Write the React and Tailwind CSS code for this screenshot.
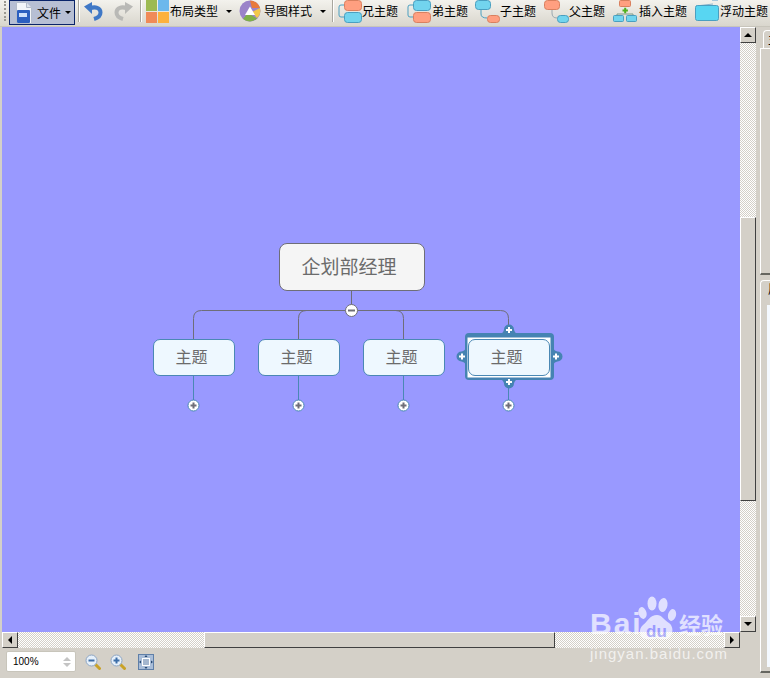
import React from "react";

const font = { fontFamily: '"Noto Sans CJK SC", sans-serif' };

function Rect({ x, y, w, h, fill, stroke }) {
  return <rect x={x} y={y} width={w} height={h} rx="3" fill={fill} stroke={stroke} />;
}

const ORANGE = "#ff9f80";
const ORANGE_D = "#d9805f";
const CYAN = "#72d4ee";
const CYAN_D = "#4a9fc0";

function DocIcon() {
  return (
    <svg width="17" height="22" viewBox="0 0 17 22">
      <path d="M1.5.5h10l5 5v16h-15z" fill="#f4f6fa" stroke="#b4bccb" />
      <path d="M11.500.5v5h5" fill="#dfe4ee" stroke="#b4bccb" />
      <rect x="2" y="8" width="13" height="13" rx="1" fill="#2c5fc0" />
      <rect x="4" y="11" width="8" height="4" fill="#cfe0fb" />
    </svg>
  );
}

function Arrow({ color }) {
  return (
    <svg width="19" height="20" viewBox="0 0 19 20">
      <path d="M6 7.500C11 5 16.500 7 16.500 11.500C16.500 15 13.500 17 10 18" fill="none" stroke={color} strokeWidth="4" />
      <path d="M0 5.500 8 1V13z" fill={color} />
    </svg>
  );
}

function LayoutIcon() {
  return (
    <svg width="23" height="23" viewBox="0 0 23 23">
      <rect x="0" y="0" width="11" height="11" fill="#9cba52" />
      <rect x="12" y="0" width="11" height="11" fill="#6cb8ec" />
      <rect x="0" y="12" width="11" height="11" fill="#f08a58" />
      <rect x="12" y="12" width="11" height="11" fill="#fdb13d" />
    </svg>
  );
}

function StyleIcon() {
  return (
    <svg width="22" height="22" viewBox="0 0 22 22">
      <circle cx="11" cy="11" r="10.5" fill="#9b83c9" />
      <path d="M11 .5A10.500 10.500 0 0 1 21 8H13z" fill="#e87a3c" />
      <path d="M21 8a10.500 10.500 0 0 1-3 10L13 12z" fill="#f2c84a" />
      <path d="M18 18.500A10.500 10.500 0 0 1 4 19l5-6z" fill="#7fb048" />
      <path d="M11 6.500 16 15H6z" fill="#fff" />
    </svg>
  );
}

function SiblingUp() {
  return (
    <svg width="24" height="23" viewBox="0 0 24 23">
      <path d="M7 5H3Q1 5 1 7V15Q1 17 3 17H7" fill="none" stroke={CYAN_D} />
      <Rect x={6.5} y={.5} w={17} h={10} fill={ORANGE} stroke={ORANGE_D} />
      <Rect x={6.5} y={12.5} w={17} h={10} fill={CYAN} stroke={CYAN_D} />
    </svg>
  );
}

function SiblingDown() {
  return (
    <svg width="24" height="23" viewBox="0 0 24 23">
      <path d="M7 5H3Q1 5 1 7V15Q1 17 3 17H7" fill="none" stroke={CYAN_D} />
      <Rect x={6.5} y={.5} w={17} h={10} fill={CYAN} stroke={CYAN_D} />
      <Rect x={6.5} y={12.5} w={17} h={10} fill={ORANGE} stroke={ORANGE_D} />
    </svg>
  );
}

function ChildIcon() {
  return (
    <svg width="25" height="23" viewBox="0 0 25 23">
      <path d="M6 10V14Q6 18 12 18" fill="none" stroke={CYAN_D} />
      <Rect x={.5} y={.5} w={15} h={9} fill={CYAN} stroke={CYAN_D} />
      <Rect x={12.5} y={15.5} w={12} h={7} fill={ORANGE} stroke={ORANGE_D} />
    </svg>
  );
}

function ParentIcon() {
  return (
    <svg width="25" height="23" viewBox="0 0 25 23">
      <path d="M8 9V13Q8 18 13 18" fill="none" stroke="#9aa8b0" />
      <Rect x={.5} y={.5} w={15} h={9} fill={ORANGE} stroke={ORANGE_D} />
      <Rect x={13.5} y={15.5} w={11} h={7} fill={CYAN} stroke={CYAN_D} />
    </svg>
  );
}

function InsertIcon() {
  return (
    <svg width="24" height="22" viewBox="0 0 24 22">
      <path d="M4 17V14H20V17" fill="none" stroke="#7a9a8a" />
      <rect x="6.500" y=".5" width="11" height="6" rx="1" fill={ORANGE} stroke={ORANGE_D} />
      <rect x=".5" y="15.500" width="10" height="6" rx="1" fill={CYAN} stroke={CYAN_D} />
      <rect x="13.500" y="15.500" width="10" height="6" rx="1" fill={CYAN} stroke={CYAN_D} />
      <path d="M9.500 9.500h1.700V7.800h2v1.700h1.700v2h-1.700v1.700h-2v-1.700h-1.700z" fill="#4fb01e" />
    </svg>
  );
}

function FloatIcon() {
  return (
    <svg width="24" height="23" viewBox="0 0 24 23">
      <path d="M17 .5h6" stroke="#a8c8dc" />
      <path d="M1 6l17-2" stroke="#8ab4cc" />
      <rect x=".5" y="5.500" width="23" height="15" rx="2" fill="#58d6f2" stroke="#4a9fc0" />
    </svg>
  );
}

function Dropdown() {
  return <div className="w-0 h-0 border-x-[3px] border-x-transparent border-t-[3px] border-t-black" />;
}

function ToolLabel({ left, width, icon, label, gap = 0 }) {
  return (
    <div className="flex items-center shrink-0" style={{ marginLeft: left, width, gap }}>
      {icon}
      <span className="text-xs text-black whitespace-nowrap">{label}</span>
    </div>
  );
}

function Separator() {
  return <div className="w-px h-[22px] bg-[#a8a69e] border-r border-white shrink-0 box-content" />;
}

function Toolbar() {
  return (
    <div className="h-[27px] pb-[4px] flex items-center shrink-0 overflow-hidden bg-gradient-to-b from-[#f3f2ed] to-[#d9d6cd] border-b border-[#c8c5bb]">
      {/* grip */}
      <div className="w-px h-5 ml-[4px] border-l-2 border-dotted border-[#9a9890]" />
      <div className="w-[66px] h-[25px] ml-[3px] self-start flex items-center pl-[5px] bg-[#b7bfd4] border border-[#0a246a] shrink-0">
        <DocIcon />
        <span className="text-xs text-black ml-[5px]">文件</span>
        <div className="ml-[4px]"><Dropdown /></div>
      </div>
      <div className="ml-[3px]"><Separator /></div>
      <div className="ml-[4px] shrink-0"><Arrow color="#3f78c6" /></div>
      <div className="ml-[11px] shrink-0 -scale-x-100"><Arrow color="#b9b9b6" /></div>
      <div className="ml-[7px]"><Separator /></div>
      <ToolLabel left={4} width={73} icon={<LayoutIcon />} label="布局类型" gap={1} />
      <div className="ml-[7px]"><Dropdown /></div>
      <ToolLabel left={7} width={73} icon={<StyleIcon />} label="导图样式" gap={3} />
      <div className="ml-[8px]"><Dropdown /></div>
      <div className="ml-[6px]"><Separator /></div>
      <ToolLabel left={4} width={61} icon={<SiblingUp />} label="兄主题" />
      <ToolLabel left={8} width={61} icon={<SiblingDown />} label="弟主题" gap={1} />
      <ToolLabel left={7} width={62} icon={<ChildIcon />} label="子主题" />
      <ToolLabel left={7} width={63} icon={<ParentIcon />} label="父主题" />
      <ToolLabel left={6} width={75} icon={<InsertIcon />} label="插入主题" gap={2} />
      <ToolLabel left={7} width={75} icon={<FloatIcon />} label="浮动主题" gap={1} />
    </div>
  );
}

function ScrollButton({ dir }) {
  const tri = {
    up: "border-x-[4px] border-x-transparent border-b-[4px] border-b-black",
    down: "border-x-[4px] border-x-transparent border-t-[4px] border-t-black",
    left: "border-y-[4px] border-y-transparent border-r-[4px] border-r-black",
    right: "border-y-[4px] border-y-transparent border-l-[4px] border-l-black",
  }[dir];
  return (
    <div className="w-4 h-4 shrink-0 flex items-center justify-center bg-[#d4d0c8] border border-t-white border-l-white border-r-[#404040] border-b-[#404040]">
      <div className={`w-0 h-0 ${tri}`} />
    </div>
  );
}

const trackCls = "bg-[repeating-conic-gradient(#d4d0c8_0_25%,#ffffff_0_50%)] bg-[length:2px_2px]";
const thumbCls = "bg-[#d4d0c8] border border-t-white border-l-white border-r-[#404040] border-b-[#404040]";

const BUMP = "M-9 5Q-5.500 4-5 .5A5 5 0 0 1 5 .5Q5.500 4 9 5z";

function Connectors() {
  const stem = "#6e6e78";
  const blue = "#4a88b4";
  const frame = "#4583b2";
  return (
    <svg className="absolute inset-0" width="738" height="605" viewBox="2 27 738 605">
      <path d="M351.500 291V310.500" fill="none" stroke={stem} />
      <path d="M193.500 339V318.500Q193.500 310.500 201.500 310.500H500.500Q508.500 310.500 508.500 318.500V334" fill="none" stroke={stem} />
      <path d="M298.500 339V318.500Q298.500 310.500 306.500 310.500" fill="none" stroke={stem} />
      <path d="M395.500 310.500Q403.500 310.500 403.500 318.500V339" fill="none" stroke={stem} />
      {[193.500, 298.500, 403.500].map((x) => (
        <path key={x} d={`M${x} 376V400`} stroke={blue} />
      ))}
      <path d="M508.500 380V400" stroke={blue} />
      {/* selection frame of the active topic */}
      <rect x="465" y="333" width="89" height="47" rx="4" fill={frame} />
      <rect x="467.500" y="337.500" width="83" height="40" fill="#ffffff" />
      {[
        [509, 329, 0],
        [509, 384, 180],
        [461, 356.500, -90],
        [558, 356.500, 90],
      ].map(([cx, cy, r]) => (
        <path key={r} d={BUMP} fill={frame} transform={`translate(${cx} ${cy}) rotate(${r})`} />
      ))}
      {[
        [509, 330],
        [509, 382],
        [462, 356.500],
        [556, 356.500],
      ].map(([cx, cy]) => (
        <path key={`${cx}-${cy}`} d={`M${cx - 3} ${cy}h6M${cx} ${cy - 3}v6`} stroke="#ffffff" strokeWidth="2" />
      ))}
      {/* folding handles */}
      <circle cx="351.500" cy="310.500" r="6" fill="#ffffff" stroke={stem} />
      <path d="M348 310.500h7" stroke={stem} strokeWidth="2" />
      {[193.500, 298.500, 403.500, 508.500].map((x) => (
        <g key={x}>
          <circle cx={x} cy="405.500" r="5.500" fill="#ffffff" stroke={blue} />
          <path d={`M${x - 3} 405.500h6M${x} 402.500v6`} stroke="#6e6e78" strokeWidth="2" />
        </g>
      ))}
    </svg>
  );
}

function Topic({ left }) {
  return (
    <div
      className="absolute top-[312px] w-[82px] h-[37px] pb-[3px] pr-[5px] flex items-center justify-center rounded-[7px] text-base text-[#6b6b6b] bg-[#eef8ff] border border-[#4a88b4]"
      style={{ left }}
    >
      主题
    </div>
  );
}

function MindMap() {
  return (
    <div className="relative w-[738px] h-[605px] bg-[#9999ff] shrink-0 overflow-hidden">
      <Connectors />
      <div className="absolute left-[277px] top-[216px] w-[146px] h-[48px] pb-[2px] pr-[6px] flex items-center justify-center rounded-[8px] bg-[#f5f5f5] border border-[#6e6e78] text-[19px] text-[#6b6b6b]">
        企划部经理
      </div>
      <Topic left={151} />
      <Topic left={256} />
      <Topic left={361} />
      <Topic left={466} />
    </div>
  );
}

function MagnifierIcon({ plus }) {
  return (
    <svg width="16" height="16" viewBox="0 0 16 16">
      <path d="M10 10l4.500 4.500" stroke="#c9a227" strokeWidth="3" strokeLinecap="round" />
      <circle cx="6.500" cy="6.500" r="5.500" fill="#e6f0fa" stroke="#8ea6c4" />
      <path d={plus ? "M3.500 6.500h6M6.500 3.500v6" : "M3.500 6.500h6"} stroke="#3c6ea8" strokeWidth="2" />
    </svg>
  );
}

function FitIcon() {
  return (
    <svg width="16" height="16" viewBox="0 0 16 16">
      <rect x=".5" y=".5" width="15" height="15" fill="#a9bdd8" stroke="#5f7fa8" />
      <rect x="4" y="4" width="8" height="8" fill="#ffffff" />
      <path d="M5 6h6M5 8h6M5 10h6" stroke="#4a6f9e" />
      <path d="M8 1l1.500 2h-3zM8 15l1.500-2h-3zM1 8l2-1.500v3zM15 8l-2-1.500v3z" fill="#24466f" />
    </svg>
  );
}

function BottomBar() {
  return (
    <div className="flex items-center h-[30px] pl-[4px] pb-[3px] shrink-0">
      <div className="w-[70px] h-[21px] flex items-center justify-between pl-[6px] pr-[4px] bg-white rounded-[2px] border border-[#c8c5bb]">
        <span className="text-[10px] text-black" style={{ fontFamily: '"Liberation Sans", sans-serif' }}>100%</span>
        <div className="flex flex-col gap-[2px]">
          <div className="w-0 h-0 border-x-[4px] border-x-transparent border-b-[4px] border-b-[#c4c4c4]" />
          <div className="w-0 h-0 border-x-[4px] border-x-transparent border-t-[4px] border-t-[#c4c4c4]" />
        </div>
      </div>
      <div className="ml-[9px]"><MagnifierIcon /></div>
      <div className="ml-[9px]"><MagnifierIcon plus /></div>
      <div className="ml-[12px]"><FitIcon /></div>
    </div>
  );
}

function SidePanel() {
  return (
    <div className="flex-1 flex flex-col min-w-0 overflow-hidden">
      <div className="h-[18px] ml-[3px] mt-[3px] pl-[4px] border-l border-t border-white rounded-tl-[4px] text-xs leading-[16px] text-black overflow-hidden whitespace-nowrap">
        主题
      </div>
      <div className="h-[227px] border-l border-t border-white border-b-2 border-b-[#666660]" />
      <div className="h-[393px] mt-[5px] border-l border-t border-white rounded-tl-[4px] border-b-2 border-b-[#666660] flex flex-col">
        <div className="pl-[7px] h-[24px] text-xs text-black overflow-hidden whitespace-nowrap">属性</div>
        <div className="ml-[6px] h-[362px] bg-[#f4f9ff]" />
      </div>
    </div>
  );
}

function Watermark() {
  return (
    <div className="absolute left-[590px] top-[596px] w-[140px] h-[68px] pointer-events-none opacity-70 text-white">
      <svg className="absolute left-[48px] top-0" width="40" height="46" viewBox="0 0 40 46">
        <ellipse cx="4.500" cy="17" rx="4" ry="6" fill="#fff" transform="rotate(-15 4.500 17)" />
        <ellipse cx="14" cy="7.500" rx="4.500" ry="7" fill="#fff" />
        <ellipse cx="25" cy="9" rx="4.500" ry="7" fill="#fff" transform="rotate(10 25 9)" />
        <ellipse cx="34" cy="19" rx="4" ry="6" fill="#fff" transform="rotate(15 34 19)" />
        <path d="M19 19c5 0 7 5 12 8s5 15-3 16-8-1-9-1-4 2-11 1-8-10-3-14 7-10 14-10z" fill="#fff" />
      </svg>
      <span className="absolute left-0 top-[13px] text-[30px] leading-none font-bold tracking-[2px]" style={{ fontFamily: '"Liberation Sans", sans-serif' }}>Bai</span>
      <span className="absolute left-[56px] top-[27px] text-[17px] leading-none font-bold text-[#9999ff]" style={{ fontFamily: '"Liberation Sans", sans-serif' }}>du</span>
      <span className="absolute left-[89px] top-[16px] text-[22px] leading-none font-bold">经验</span>
      <span className="absolute left-0 top-[50px] text-[15px] leading-none tracking-[1px] whitespace-nowrap" style={{ fontFamily: '"Liberation Sans", sans-serif' }}>jingyan.baidu.com</span>
    </div>
  );
}

export default function App() {
  return (
    <div className="relative w-[770px] h-[678px] overflow-hidden flex flex-col bg-[#d4d0c8]" style={font}>
      <Toolbar />
      <div className="flex flex-1 min-h-0 pl-[2px]">
        {/* canvas with its scroll bars */}
        <div className="flex flex-col w-[754px] shrink-0">
          <div className="flex h-[605px]">
            <MindMap />
            <div className="w-4 flex flex-col">
              <ScrollButton dir="up" />
              <div className={`h-[174px] ${trackCls}`} />
              <div className={`h-[284px] ${thumbCls}`} />
              <div className={`flex-1 ${trackCls}`} />
              <ScrollButton dir="down" />
            </div>
          </div>
          <div className="flex h-4 w-[738px]">
            <ScrollButton dir="left" />
            <div className={`w-[186px] ${trackCls}`} />
            <div className={`w-[351px] ${thumbCls}`} />
            <div className={`flex-1 ${trackCls}`} />
            <ScrollButton dir="right" />
          </div>
          <BottomBar />
        </div>
        <div className="w-1 shrink-0" />
        <SidePanel />
      </div>
      <Watermark />
    </div>
  );
}
